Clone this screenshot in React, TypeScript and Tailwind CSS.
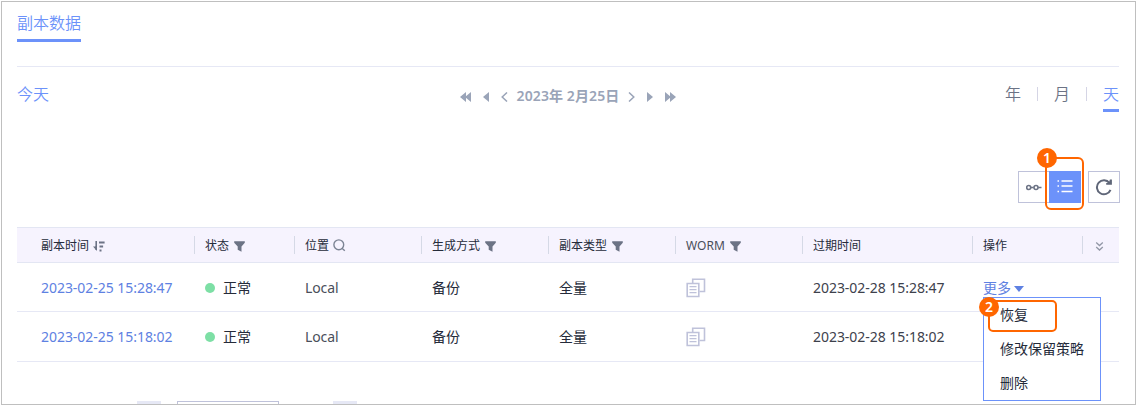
import type { ReactNode } from "react";

function Filter() {
  return (
    <svg width="11" height="11" viewBox="0 0 11 11" className="ml-[5px] mt-[2px] shrink-0">
      <path d="M.2.2h10.6v1.6L7.5 5.6v5.2L3.7 8.8V5.6L.2 1.8Z" fill="#6c7385" />
    </svg>
  );
}

function SortIcon() {
  return (
    <svg width="12" height="11" viewBox="0 0 12 11" className="ml-[4px] mt-[2px] shrink-0" fill="none" stroke="#6c7385">
      <path d="M3.2 0v9" strokeWidth="1.6" />
      <path d="M4 3v7L0 5.6h2.5" fill="#6c7385" stroke="none" />
      <path d="M6 1.5h5.6M6.5 5.5h3.6M6.5 9.5h2" strokeWidth="2" />
    </svg>
  );
}

function SearchIcon() {
  return (
    <svg width="13" height="13" viewBox="0 0 13 13" className="ml-[4px] shrink-0" fill="none" stroke="#7c8494" strokeWidth="1.4">
      <circle cx="5.8" cy="5.8" r="4.9" />
      <path d="M9 9.2l2.8 2.6" />
    </svg>
  );
}

function CopyIcon() {
  return (
    <svg width="20" height="20" viewBox="0 0 20 20" className="mt-px" fill="none" stroke="#bfc2da" strokeWidth="1.6">
      <path d="M6.7 5V1.2h11.8v12.3h-5" />
      <path d="M1.2 5.5h11.6v13H1.2Z" />
      <path d="M3.5 8.7h7M3.5 11.7h7M3.5 14.7h7" strokeWidth="1.2" />
    </svg>
  );
}

function Head({ width, children, icon }: { width: string; children: ReactNode; icon?: ReactNode }) {
  return (
    <div className={`flex h-full shrink-0 items-center ${width}`}>
      <div className="mr-[10px] h-[18px] w-px bg-[#d5d9e6]" />
      <span className="pt-[2px]">{children}</span>
      {icon}
    </div>
  );
}

function Row({ created, expires, height, action }: { created: string; expires: string; height: string; action?: ReactNode }) {
  return (
    <div className={`flex items-center border-b border-[#e6e8f5] text-[14px] ${height}`}>
      <div className="w-[188px] shrink-0 pl-[24px] tracking-[-0.04px] text-[#5e81e2]">{created}</div>
      <div className="flex w-[100px] shrink-0 items-center">
        <span className="mr-[8px] mt-px size-[10px] rounded-full bg-[#7ddfa5]" />
        正常
      </div>
      <div className="w-[127px] shrink-0 tracking-[-0.1px] text-[#4a4e5a]">Local</div>
      <div className="w-[127px] shrink-0">备份</div>
      <div className="w-[127px] shrink-0">全量</div>
      <div className="w-[127px] shrink-0">
        <CopyIcon />
      </div>
      <div className="w-[170px] shrink-0 tracking-[-0.04px] text-[#3d414c]">{expires}</div>
      {action}
    </div>
  );
}

function Badge({ n, className }: { n: number; className: string }) {
  return (
    <div className={`absolute flex size-[20px] items-center justify-center rounded-full bg-[#ff6600] text-[14px] font-semibold leading-none text-white ${className}`}>
      {n}
    </div>
  );
}

export default function App() {
  return (
    <div className="h-[405px] w-[1136px] overflow-hidden bg-white pl-px pt-px font-['Noto_Sans','Noto_Sans_CJK_SC',sans-serif] text-[#252b3a]">
      <div className="relative flex h-[404px] w-[1135px] flex-col overflow-hidden border border-[#bfbfbf] pl-[15px] pr-[16px]">
        <div className="flex h-[65px] shrink-0 items-start border-b border-[#e6e8f5]">
          <div className="flex h-[40px] items-center border-b-[3px] border-[#6c92fa] pt-[5px] text-[16px] font-[350] leading-none text-[#6c92fa]">
            副本数据
          </div>
        </div>

        <div className="flex h-[55px] shrink-0 items-center justify-between text-[16px] leading-none">
          <div className="w-[200px] pb-px font-[350] text-[#6c92fa]">今天</div>
          <div className="flex items-center pl-px pt-[3px] text-[14px] font-semibold text-[#9aa4b8]">
            <svg width="12" height="10" viewBox="0 0 12 10" fill="#9aa4b8" className="mr-[11px] mt-px">
              <path d="M0 5l6-5v10ZM5 5l6-5v10Z" />
            </svg>
            <svg width="6" height="10" viewBox="0 0 6 10" fill="#9aa4b8" className="mr-[12px] mt-px">
              <path d="M0 5l6-5v10Z" />
            </svg>
            <svg width="7" height="10" viewBox="0 0 7 10" fill="none" stroke="#9aa4b8" strokeWidth="1.5" className="mr-[9px] mt-px">
              <path d="M6 .5L1.2 5 6 9.5" />
            </svg>
            <span className="tracking-[0.1px]">2023年 2月25日</span>
            <svg width="7" height="10" viewBox="0 0 7 10" fill="none" stroke="#9aa4b8" strokeWidth="1.5" className="ml-[9px] mt-px">
              <path d="M1 .5L5.8 5 1 9.5" />
            </svg>
            <svg width="6" height="10" viewBox="0 0 6 10" fill="#9aa4b8" className="ml-[12px] mt-px">
              <path d="M6 5L0 0v10Z" />
            </svg>
            <svg width="12" height="10" viewBox="0 0 12 10" fill="#9aa4b8" className="ml-[12px] mt-px">
              <path d="M6 5L0 0v10ZM11 5L5 0v10Z" />
            </svg>
          </div>
          <div className="flex w-[200px] items-center justify-end pb-[2px] font-[350] text-[#6c7385]">
            <span>年</span>
            <span className="ml-[16px] mr-[16px] h-[14px] w-px bg-[#d5d5e5]" />
            <span>月</span>
            <span className="ml-[16px] mr-[16px] h-[14px] w-px bg-[#d5d5e5]" />
            <span className="flex h-[37px] items-center border-b-[3px] border-[#6c92fa] pt-[3px] text-[#6c92fa]">天</span>
          </div>
        </div>

        <div className="mr-[-1px] mt-[49px] flex h-[32px] shrink-0 justify-end">
          <div className="flex h-[32px] w-[31px] items-center justify-end border border-r-0 border-[#bfc2da]">
            <svg width="23" height="10" viewBox="0 0 23 10" fill="none" stroke="#6c7385" strokeWidth="1.6">
              <circle cx="2.7" cy="5.5" r="2" />
              <circle cx="10" cy="5.5" r="2" />
              <path d="M4.7 5.5h3M12.2 5.5h3.3" />
            </svg>
          </div>
          <div className="flex size-[32px] items-center justify-center bg-[#6c92fa] pb-[2px]">
            <svg width="16" height="14" viewBox="0 0 16 14" fill="none" stroke="white" strokeWidth="1.5">
              <path d="M4.5 2H15.5M4.5 7H15.5M4.5 12.5H15.5M.5 2H2M.5 7H2M.5 12.5H2" />
            </svg>
          </div>
          <div className="ml-[7px] flex size-[32px] items-center justify-center border border-[#bfc2da]">
            <svg width="18" height="18" viewBox="0 0 18 18" fill="none" stroke="#5f6678" strokeWidth="2">
              <path d="M15.5 11.8A7 7 0 1 1 14.5 5" />
              <path d="M16.9 1.5v5.3h-5.7V5l2.7-.5 1-3Z" fill="#5f6678" stroke="none" />
            </svg>
          </div>
        </div>

        <div className="mt-[24px] flex h-[36px] shrink-0 items-center border-y border-[#e3e6f3] bg-[#f6f3fe] text-[12px]">
          <div className="flex w-[177px] shrink-0 items-center pl-[24px]">
            <span className="pt-[2px]">副本时间</span>
            <SortIcon />
          </div>
          <Head width="w-[100px]" icon={<Filter />}>状态</Head>
          <Head width="w-[127px]" icon={<SearchIcon />}>位置</Head>
          <Head width="w-[127px]" icon={<Filter />}>生成方式</Head>
          <Head width="w-[127px]" icon={<Filter />}>副本类型</Head>
          <Head width="w-[127px]" icon={<Filter />}><span className="text-[#4a4e5a]">WORM</span></Head>
          <Head width="w-[170px]">过期时间</Head>
          <Head width="w-[110px]">操作</Head>
          <Head width="w-[37px]">
            <svg width="11" height="9" viewBox="0 0 11 9" fill="none" stroke="#9297a6" strokeWidth="1.3" className="ml-px">
              <path d="M2.2.5l3.3 3 3.3-3M2.2 5l3.3 3 3.3-3" />
            </svg>
          </Head>
        </div>

        <div className="shrink-0">
          <Row
            created="2023-02-25 15:28:47"
            expires="2023-02-28 15:28:47"
            height="h-[49px]"
            action={
              <div className="relative flex items-center text-[#5e81e2]">
                更多
                <svg width="10" height="6" viewBox="0 0 10 6" className="ml-[3px] mt-[3px]" fill="#5e81e2">
                  <path d="M0 0h10L5 6Z" />
                </svg>
                <div className="absolute left-0 top-[20px] z-10 flex h-[104px] w-[118px] flex-col border border-[#6c92fa] bg-white pl-[16px] text-[#252b3a]">
                  <div className="flex h-[34px] items-center">恢复</div>
                  <div className="flex h-[34px] items-center">修改保留策略</div>
                  <div className="flex h-[34px] items-center">删除</div>
                  <div className="absolute left-[4px] top-[2px] h-[32px] w-[69px] rounded-[5px] border-2 border-[#ff6600]" />
                  <Badge n={2} className="left-[-5px] top-[-1px]" />
                </div>
              </div>
            }
          />
          <Row created="2023-02-25 15:18:02" expires="2023-02-28 15:18:02" height="h-[50px]" />
        </div>

        <div className="mt-[39px] flex h-[3px] shrink-0 pl-[120px]">
          <div className="h-[3px] w-[24px] bg-[#e6e8f5]" />
          <div className="ml-[16px] h-[3px] w-[102px] border border-b-0 border-[#bfc2da]" />
          <div className="ml-[54px] h-[3px] w-[24px] bg-[#e6e8f5]" />
        </div>

        <div className="absolute left-[1043px] top-[155px] h-[53px] w-[39px] rounded-[6px] border-2 border-[#ff6600]" />
        <Badge n={1} className="left-[1035px] top-[146px]" />
      </div>
    </div>
  );
}
